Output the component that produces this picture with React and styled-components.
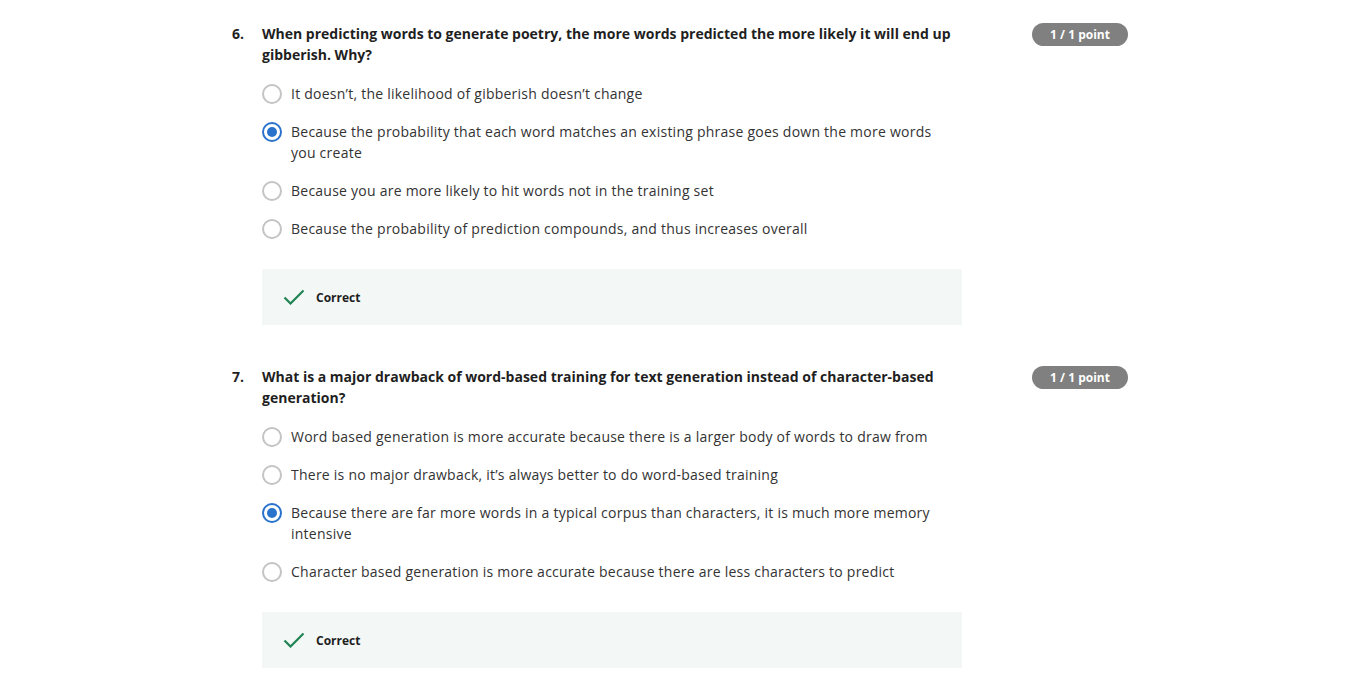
import React from "react";
import styled, { createGlobalStyle } from "styled-components";

const GlobalStyle = createGlobalStyle`
  * { box-sizing: border-box; margin: 0; padding: 0; }
  body {
    background: #ffffff;
    font-family: "Open Sans", "Liberation Sans", sans-serif;
    color: #1f1f1f;
  }
`;

const Page = styled.div`
  width: 896px;
  margin-left: 232px;
  padding-top: 23px;
  display: flex;
  flex-direction: column;
  gap: 41px;
`;

const Question = styled.section`
  display: flex;
  flex-direction: column;
`;

const Head = styled.div`
  display: flex;
  align-items: flex-start;
`;

const Num = styled.span`
  width: 30px;
  flex: none;
  font-size: 14px;
  font-weight: 700;
  line-height: 21px;
  color: #1f1f1f;
`;

const Prompt = styled.h3`
  width: 700px;
  flex: none;
  font-size: 14px;
  font-weight: 700;
  line-height: 21px;
  color: #1f1f1f;
`;

const Badge = styled.span`
  margin-left: auto;
  width: 96px;
  height: 23px;
  border-radius: 12px;
  background: #808080;
  color: #ffffff;
  font-size: 12px;
  font-weight: 700;
  display: flex;
  align-items: center;
  justify-content: center;
`;

const Options = styled.ul`
  list-style: none;
  margin: 18px 0 0 30px;
  width: 670px;
  display: flex;
  flex-direction: column;
  gap: 17px;
`;

const Option = styled.li`
  display: flex;
  align-items: flex-start;
  gap: 9px;
  font-size: 14px;
  line-height: 21px;
  letter-spacing: 0.24px;
  color: #333333;
`;

const Radio = styled.span`
  flex: none;
  width: 20px;
  height: 20px;
  margin-top: 0.5px;
  border-radius: 50%;
  border: 2px solid ${(p) => (p.checked ? "#2a73cc" : "#c4c4c4")};
  display: flex;
  align-items: center;
  justify-content: center;
  &::after {
    content: "";
    width: 10px;
    height: 10px;
    border-radius: 50%;
    background: #2a73cc;
    display: ${(p) => (p.checked ? "block" : "none")};
  }
`;

const Feedback = styled.div`
  margin: 30px 0 0 30px;
  width: 700px;
  height: 56px;
  background: #f3f8f6;
  display: flex;
  align-items: center;
  padding-left: 21px;
  gap: 11px;
  font-size: 12px;
  font-weight: 700;
  color: #1f1f1f;
`;

const Check = () => (
  <svg width="22" height="16" viewBox="0 0 22 16">
    <path d="M1.5 8.5 L7.5 14.5 L20.5 1.5" fill="none" stroke="#1f8354" strokeWidth="2.2" />
  </svg>
);

const questions = [
  {
    n: "6.",
    text: "When predicting words to generate poetry, the more words predicted the more likely it will end up gibberish. Why?",
    picked: 1,
    options: [
      "It doesn’t, the likelihood of gibberish doesn’t change",
      "Because the probability that each word matches an existing phrase goes down the more words you create",
      "Because you are more likely to hit words not in the training set",
      "Because the probability of prediction compounds, and thus increases overall",
    ],
  },
  {
    n: "7.",
    text: "What is a major drawback of word-based training for text generation instead of character-based generation?",
    picked: 2,
    options: [
      "Word based generation is more accurate because there is a larger body of words to draw from",
      "There is no major drawback, it’s always better to do word-based training",
      "Because there are far more words in a typical corpus than characters, it is much more memory intensive",
      "Character based generation is more accurate because there are less characters to predict",
    ],
  },
];

export default function App() {
  return (
    <>
      <GlobalStyle />
      <Page>
        {questions.map((q) => (
          <Question key={q.n}>
            <Head>
              <Num>{q.n}</Num>
              <Prompt>{q.text}</Prompt>
              <Badge>1 / 1 point</Badge>
            </Head>
            <Options>
              {q.options.map((o, i) => (
                <Option key={i}>
                  <Radio checked={i === q.picked} />
                  <span>{o}</span>
                </Option>
              ))}
            </Options>
            <Feedback>
              <Check />
              Correct
            </Feedback>
          </Question>
        ))}
      </Page>
    </>
  );
}
